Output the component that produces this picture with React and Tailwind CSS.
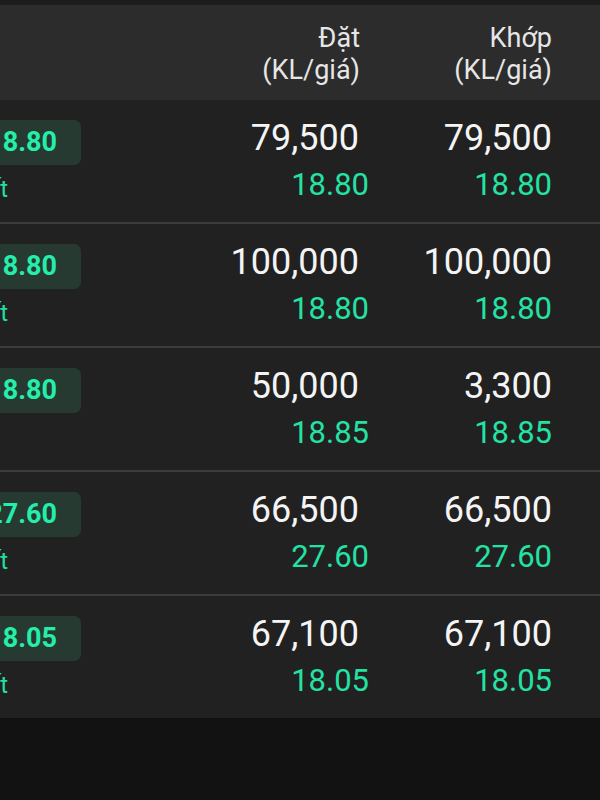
import React from 'react';

const orders = [
  { price: '18.80', status: 'Khớp hết', placedQty: '79,500', placedPrice: '18.80', matchQty: '79,500', matchPrice: '18.80' },
  { price: '18.80', status: 'Khớp hết', placedQty: '100,000', placedPrice: '18.80', matchQty: '100,000', matchPrice: '18.80' },
  { price: '18.80', status: 'Chờ khớp', hideStatus: true, placedQty: '50,000', placedPrice: '18.85', matchQty: '3,300', matchPrice: '18.85' },
  { price: '27.60', status: 'Khớp hết', placedQty: '66,500', placedPrice: '27.60', matchQty: '66,500', matchPrice: '27.60' },
  { price: '18.05', status: 'Khớp hết', placedQty: '67,100', placedPrice: '18.05', matchQty: '67,100', matchPrice: '18.05' },
];

function OrderRow({ order, first }) {
  return (
    <div
      className={`grid grid-cols-[177px_193px_230px] bg-[#212121] ${
        first ? 'h-[122px]' : 'h-[124px] border-t-2 border-[#3c3c3c]'
      }`}
    >
      {/* Left cell (mostly scrolled off screen) */}
      <div className="flex flex-col pt-[20px]">
        <div className="w-[81px] flex justify-end">
          <div className="shrink-0 h-[45px] flex items-center rounded-[7px] bg-[#263a31] pl-[25px] pr-[24px]">
            <span className="text-[27px] leading-[27px] font-bold text-[#24eeaa]">{order.price}</span>
          </div>
        </div>
        <div className={`${order.hideStatus ? 'w-0' : 'w-[8px]'} mt-[12px] flex justify-end`}>
          <span className="shrink-0 whitespace-nowrap text-[24px] leading-[24px] text-[#22dfa0]">
            {order.status}
          </span>
        </div>
      </div>

      {/* Đặt */}
      <div className="flex flex-col items-end pt-[20px]">
        <span className="pr-[11px] text-[36px] leading-[36px] text-[#f4f4f4]">{order.placedQty}</span>
        <span className="pr-[1px] mt-[13px] text-[31px] leading-[31px] text-[#24e2a3]">{order.placedPrice}</span>
      </div>

      {/* Khớp */}
      <div className="flex flex-col items-end pt-[20px] pr-[48px]">
        <span className="text-[36px] leading-[36px] text-[#f4f4f4]">{order.matchQty}</span>
        <span className="mt-[13px] text-[31px] leading-[31px] text-[#24e2a3]">{order.matchPrice}</span>
      </div>
    </div>
  );
}

export default function App() {
  return (
    <div
      className="w-[600px] h-[800px] overflow-hidden bg-[#121212]"
      style={{ fontFamily: 'Roboto, "Noto Sans", sans-serif' }}
    >
      <div className="h-[5px] bg-[#1c1c1c]" />

      {/* Header */}
      <div className="grid grid-cols-[177px_193px_230px] h-[95px] bg-[#2c2c2c] pt-[17px] text-[27px] leading-[32px] text-[#e6e6e6]">
        <div />
        <div className="flex flex-col items-end pr-[10px]">
          <span>Đặt</span>
          <span>(KL/giá)</span>
        </div>
        <div className="flex flex-col items-end pr-[48px]">
          <span>Khớp</span>
          <span>(KL/giá)</span>
        </div>
      </div>

      {orders.map((o, i) => (
        <OrderRow key={i} order={o} first={i === 0} />
      ))}
    </div>
  );
}
